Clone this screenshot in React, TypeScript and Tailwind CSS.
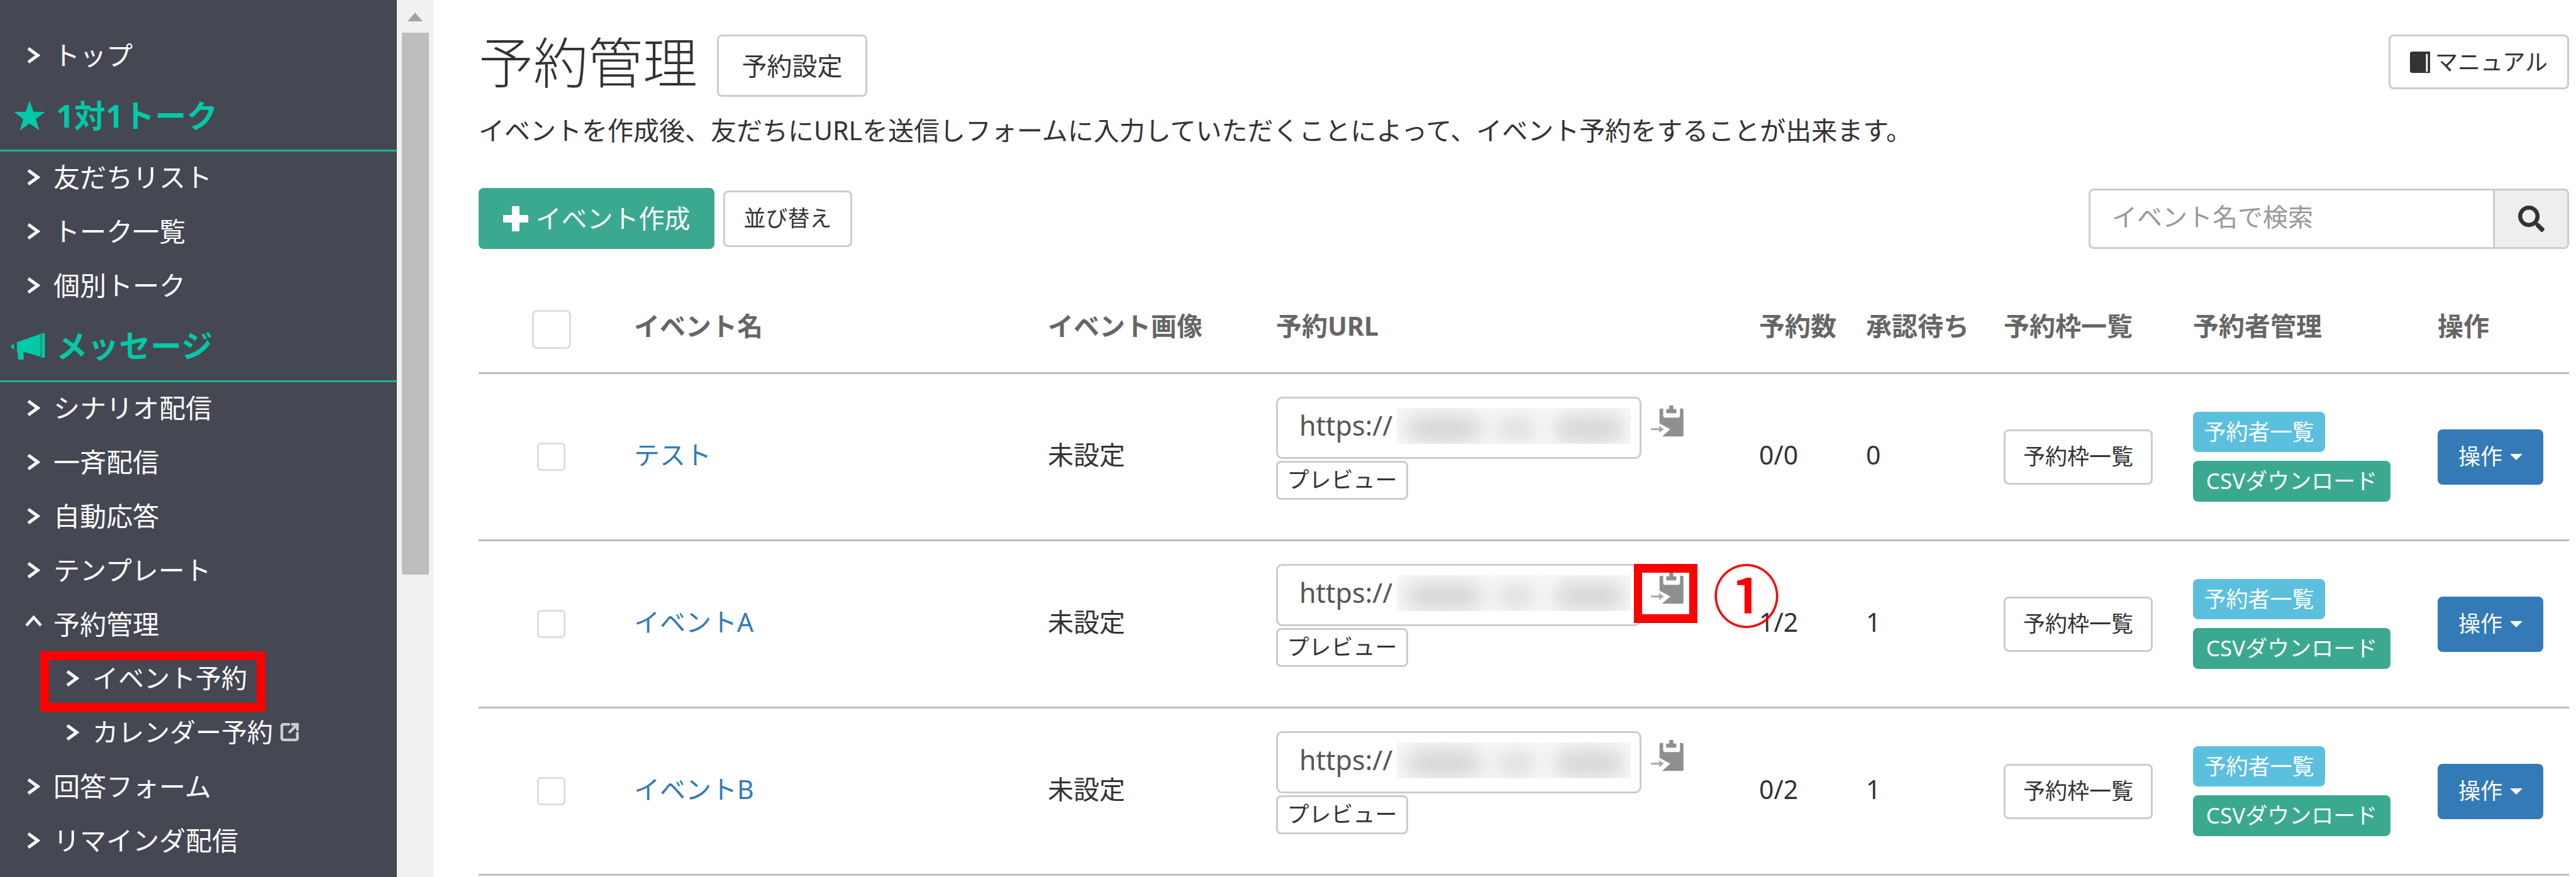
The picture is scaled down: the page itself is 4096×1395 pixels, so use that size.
import { SquareArrowOutUpRight } from 'lucide-react';
import { FaSearch } from 'react-icons/fa';

const COLS = 'grid grid-cols-[247px_658px_363px_768px_170px_219px_301px_389px_209px]';
const BTN = 'inline-flex items-center justify-center rounded-[8px] border-[3px] border-[#ccc] bg-white text-[#333]';

const EVENTS = [
  { name: 'テスト', count: '0/0', waiting: '0' },
  { name: 'イベントA', count: '1/2', waiting: '1', marked: true },
  { name: 'イベントB', count: '0/2', waiting: '1' },
];

function Chevron({ open }: { open?: boolean }) {
  if (open) {
    return (
      <svg viewBox="0 0 27 20" className="h-[20px] w-[27px] shrink-0 -translate-y-[5px]" fill="none" stroke="#fff" strokeWidth="4.5">
        <polyline points="2,17 13.5,4 25,17" />
      </svg>
    );
  }
  return (
    <svg viewBox="0 0 22 26" className="h-[26px] w-[22px] shrink-0" fill="none" stroke="#fff" strokeWidth="5">
      <polyline points="3,2 18,13 3,24" />
    </svg>
  );
}

function NavItem({ label, sub, open, boxed, external }: { label: string; sub?: boolean; open?: boolean; boxed?: boolean; external?: boolean }) {
  return (
    <div className={`relative flex h-[86px] items-center pb-[5px] ${sub ? 'pl-[104px] text-[41px]' : 'pl-[42px] text-[42px]'} text-white`}>
      <span className="flex w-[22px] shrink-0 justify-center"><Chevron open={open} /></span>
      <span className="ml-[21px] whitespace-nowrap">{label}</span>
      {external && <SquareArrowOutUpRight className="ml-[10px] h-[33px] w-[33px] text-[#ccc]" strokeWidth={3.2} />}
      {boxed && <div className="absolute left-[64px] top-[-2px] h-[96px] w-[358px] border-[14px] border-[#ff0000]" />}
    </div>
  );
}

function NavHeading({ label, icon, height }: { label: string; icon: React.ReactNode; height: string }) {
  return (
    <div className={`flex items-center border-b-[3px] border-[#1db597] pb-[3px] pl-[21px] text-[50px] font-bold text-[#00c9a7] ${height}`}>
      <span className="flex w-[68px] shrink-0">{icon}</span>
      <span className="whitespace-nowrap">{label}</span>
    </div>
  );
}

function Star() {
  return (
    <svg viewBox="0 0 52 50" className="h-[48px] w-[52px]" fill="currentColor">
      <polygon points="26,0 32.5,18.5 52,18.8 36.5,30.5 42,49.5 26,38 10,49.5 15.5,30.5 0,18.8 19.5,18.5" />
    </svg>
  );
}

function Bullhorn() {
  return (
    <svg viewBox="0 0 180 135" className="h-[42px] w-[56px] -translate-x-[5px]" fill="currentColor">
      <polygon points="2,66 18,55 22,80 14,80" />
      <path d="M35 45 L155 5 V120 L68 95 L70 135 H42 L38 95 H35 Z" />
      <rect x="155" y="0" width="7" height="125" opacity="0.55" />
      <rect x="162" y="0" width="16" height="125" />
    </svg>
  );
}

function ClipboardIcon() {
  return (
    <svg viewBox="0 0 160 155" className="h-[50px] w-[52px]">
      <path d="M50 15 H152 Q160 15 160 23 V145 Q160 153 152 153 H55 L95 117 L42 88 V23 Q42 15 50 15 Z" fill="#8f8f8f" />
      <path d="M60 10 H143 V48 Q143 60 131 60 H72 Q60 60 60 48 Z" fill="#fff" />
      <path d="M90 0 H110 V18 H125 V38 H75 V18 H90 Z" fill="#8f8f8f" />
      <path d="M0 112 H40 V100 L64 117 L40 134 V122 H0 Z" fill="#a8a8a8" />
    </svg>
  );
}

function BlurredUrl() {
  return (
    <div className="flex h-[57px] w-[372px] items-center overflow-hidden bg-[#f8f8f8] pl-[14px] pt-[10px]">
      <div className="h-[44px] w-[122px] rounded-full bg-[#d6d6d6] blur-[15px]" />
      <div className="ml-[22px] h-[38px] w-[64px] rounded-full bg-[#dedede] blur-[15px]" />
      <div className="ml-[28px] h-[44px] w-[112px] rounded-full bg-[#d6d6d6] blur-[15px]" />
    </div>
  );
}

function EventRow({ name, count, waiting, marked }: { name: string; count: string; waiting: string; marked?: boolean }) {
  return (
    <div className={`${COLS} h-[266px] items-center border-b-[3px] border-[#bbb] text-[41px] text-[#333]`}>
      <div className="pl-[93px]">
        <div className="h-[45px] w-[45px] rounded-[6px] border-[3px] border-[#ddd] bg-white" />
      </div>
      <div className="pb-[6px] text-[#337ab7]">{name}</div>
      <div className="pb-[6px]">未設定</div>
      <div className="pb-[28px]">
        <div className="flex">
          <div className="flex h-[99px] w-[581px] items-center rounded-[10px] border-[3px] border-[#ccc] bg-white pb-[6px] pl-[34px]">
            <span className="w-[155px] shrink-0 text-[43px] text-[#555]">https://</span>
            <BlurredUrl />
          </div>
          <span className="relative ml-[15px] mt-[14px] h-[50px] w-[52px]">
            {marked && (
              <>
                <span className="absolute left-[-27px] top-[-14px] h-[94px] w-[101px] border-x-[13px] border-y-[14px] border-[#ff0000] bg-white" />
                <span className="absolute left-[98px] top-[-17px] text-[108px] font-medium leading-[108px] text-[#ff0000]">①</span>
              </>
            )}
            <span className="relative block"><ClipboardIcon /></span>
          </span>
        </div>
        <div className={`${BTN} mt-[3px] h-[62px] w-[210px] text-[35px]`}>プレビュー</div>
      </div>
      <div className="pb-[6px]">{count}</div>
      <div className="pb-[6px]">{waiting}</div>
      <div>
        <div className={`${BTN} h-[88px] w-[237px] text-[35px]`}>予約枠一覧</div>
      </div>
      <div className="flex flex-col items-start gap-[14px]">
        <div className="flex h-[64px] w-[210px] items-center justify-center rounded-[8px] bg-[#5bc0de] text-[35px] text-white">予約者一覧</div>
        <div className="flex h-[65px] w-[314px] items-center justify-center whitespace-nowrap rounded-[8px] bg-[#3aa98f] text-[35px] text-white">CSVダウンロード</div>
      </div>
      <div>
        <div className="flex h-[88px] w-[168px] items-center justify-center rounded-[8px] bg-[#337ab7] text-[35px] text-white">
          操作
          <span className="ml-[12px] h-0 w-0 border-x-[10px] border-t-[10px] border-x-transparent border-t-white" />
        </div>
      </div>
    </div>
  );
}

export default function App() {
  return (
    <div className="flex h-[1395px] w-[4096px] overflow-hidden bg-white font-['Noto_Sans','Noto_Sans_CJK_JP',sans-serif]">
      {/* sidebar */}
      <aside className="h-full w-[631px] shrink-0 bg-[#454752] pt-[47px]">
        <NavItem label="トップ" />
        <NavHeading label="1対1トーク" height="h-[108px]" icon={<Star />} />
        <NavItem label="友だちリスト" />
        <NavItem label="トーク一覧" />
        <NavItem label="個別トーク" />
        <NavHeading label="メッセージ" height="h-[109px]" icon={<Bullhorn />} />
        <NavItem label="シナリオ配信" />
        <NavItem label="一斉配信" />
        <NavItem label="自動応答" />
        <NavItem label="テンプレート" />
        <NavItem label="予約管理" open />
        <NavItem label="イベント予約" sub boxed />
        <NavItem label="カレンダー予約" sub external />
        <NavItem label="回答フォーム" />
        <NavItem label="リマインダ配信" />
      </aside>

      {/* scrollbar */}
      <div className="flex h-full w-[58px] shrink-0 flex-col items-center bg-[#f1f1f1]">
        <div className="mt-[20px] h-0 w-0 border-x-[12px] border-b-[14px] border-x-transparent border-b-[#a3a3a3]" />
        <div className="mt-[18px] h-[862px] w-[43px] bg-[#bdbdbd]" />
      </div>

      {/* main */}
      <main className="min-w-0 flex-1 pl-[72px] pr-[11px] pt-[55px]">
        <div className="flex items-start justify-between">
          <div className="flex items-start">
            <h1 className="-mt-[6px] text-[87px] font-light leading-[100px] text-[#333]">予約管理</h1>
            <div className={`${BTN} ml-[31px] h-[99px] w-[239px] text-[40px]`}>予約設定</div>
          </div>
          <div className={`${BTN} h-[87px] w-[287px] text-[36px]`}>
            <svg viewBox="0 0 34 36" className="mr-[8px] h-[36px] w-[32px]">
              <path d="M0 4 Q0 0 4 0 H34 V36 H4 Q0 36 0 32 Z" fill="#333" />
              <rect x="27" y="4" width="3" height="30" fill="#fff" />
            </svg>
            マニュアル
          </div>
        </div>

        <p className="mt-[25px] whitespace-nowrap text-[41px] leading-[56px] text-[#333]">
          イベントを作成後、友だちにURLを送信しフォームに入力していただくことによって、イベント予約をすることが出来ます。
        </p>

        <div className="mt-[64px] flex items-center justify-between">
          <div className="flex items-center">
            <div className="flex h-[97px] w-[375px] items-center justify-center rounded-[8px] bg-[#3aa98f] text-[41px] text-white">
              <svg viewBox="0 0 40 40" className="mr-[12px] h-[40px] w-[40px]" fill="#fff">
                <path d="M14 0 H26 V14 H40 V26 H26 V40 H14 V26 H0 V14 H14 Z" />
              </svg>
              イベント作成
            </div>
            <div className={`${BTN} ml-[14px] h-[90px] w-[205px] text-[35px]`}>並び替え</div>
          </div>
          <div className="flex h-[96px] w-[764px] rounded-[8px] border-[3px] border-[#ccc]">
            <div className="flex flex-1 items-center pb-[6px] pl-[34px] text-[40px] text-[#999]">イベント名で検索</div>
            <div className="flex w-[118px] items-center justify-center rounded-r-[6px] border-l-[3px] border-[#ccc] bg-[#eee] text-[#333]">
              <FaSearch className="h-[42px] w-[42px]" />
            </div>
          </div>
        </div>

        <div className="mt-[60px]">
          <div className={`${COLS} h-[139px] items-center border-b-[3px] border-[#bbb] text-[41px] font-bold text-[#666]`}>
            <div className="pl-[85px]">
              <div className="h-[62px] w-[62px] rounded-[8px] border-[3px] border-[#ddd] bg-white" />
            </div>
            <div className="pb-[10px]">イベント名</div>
            <div className="pb-[10px]">イベント画像</div>
            <div className="pb-[10px]">予約URL</div>
            <div className="pb-[10px]">予約数</div>
            <div className="pb-[10px]">承認待ち</div>
            <div className="pb-[10px]">予約枠一覧</div>
            <div className="pb-[10px]">予約者管理</div>
            <div className="pb-[10px]">操作</div>
          </div>
          {EVENTS.map((ev) => (
            <EventRow key={ev.name} {...ev} />
          ))}
        </div>
      </main>
    </div>
  );
}
